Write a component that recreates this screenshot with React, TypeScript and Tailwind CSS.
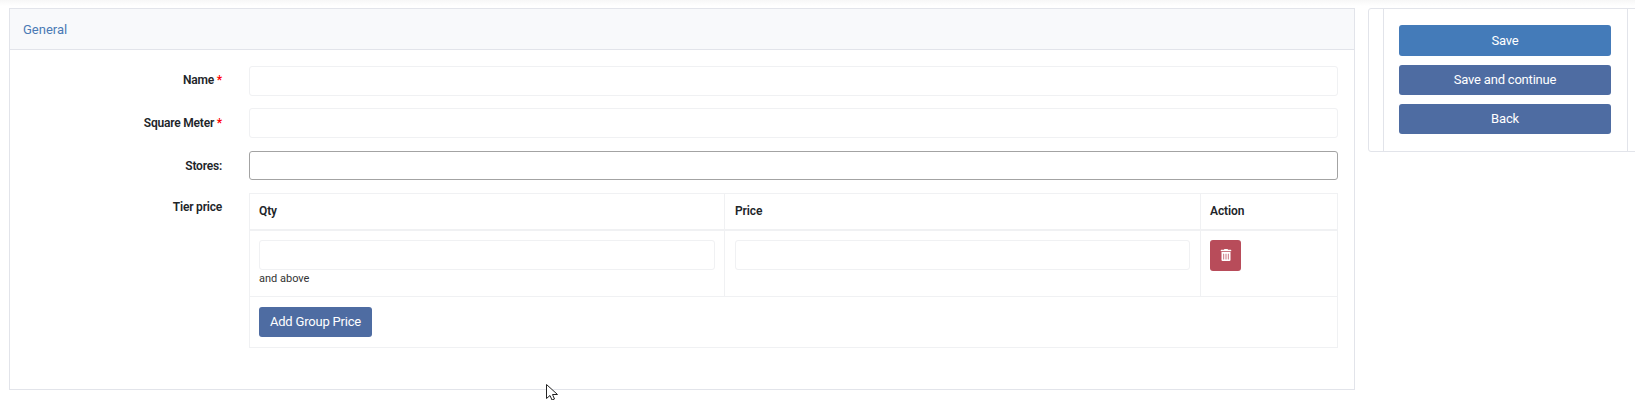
import React from "react";
import { FaTrashAlt } from "react-icons/fa";

const inputClass = "h-[30px] w-full rounded-[3px] border border-[#f0f1f3] bg-white";

const FormRow = ({ label, required, labelTop = "pt-[7px]", children }: { label: string; required?: boolean; labelTop?: string; children: React.ReactNode }) => (
    <div className="flex">
        <label className={`w-[212px] shrink-0 text-right text-[12px] font-semibold leading-[16px] tracking-[-0.2px] text-[#212529] ${labelTop}`}>
            {label}
            {required && <span className="text-[#ff0000]"> *</span>}
        </label>
        <div className="ml-[27px] flex-1">{children}</div>
    </div>
);

const SideButton = ({ label, color, height }: { label: string; color: string; height: string }) => (
    <button className={`w-full rounded-[3px] text-[13px] tracking-[-0.2px] text-white ${color} ${height}`}>{label}</button>
);

export default function App() {
    return (
        <div className="relative h-[400px] w-[1635px] overflow-hidden bg-white font-['Roboto',sans-serif]">
            <div className="absolute inset-x-0 top-0 h-[6px] bg-gradient-to-b from-[#f7f7f7] to-white" />
            <div className="relative flex items-start pl-[9px] pt-2">
                {/* General card */}
                <div className="h-[382px] w-[1346px] shrink-0 border border-[#e2e4ea] bg-white">
                    <div className="flex h-[41px] items-center border-b border-[#e2e4ea] bg-[#f8f9fb] pl-[13px] pt-[2px] text-[13px] text-[#4a7ab5]">
                        General
                    </div>
                    <div className="flex flex-col pr-[16px] pt-[16px]">
                        <FormRow label="Name" required labelTop="pt-[6px]">
                            <input className={inputClass} />
                        </FormRow>
                        <div className="mt-[12px]">
                            <FormRow label="Square Meter" required>
                                <input className={inputClass} />
                            </FormRow>
                        </div>
                        <div className="mt-[13px]">
                            <FormRow label="Stores:">
                                <input className="h-[29px] w-full rounded-[3px] border border-[#a3a3a3] bg-white" />
                            </FormRow>
                        </div>
                        <div className="mt-[13px]">
                            <FormRow label="Tier price" labelTop="pt-[6px]">
                                <table className="w-full table-fixed border-collapse text-[12px] text-[#212529]">
                                    <thead>
                                        <tr className="h-[36px] border-b-2 border-[#f0f1f3]">
                                            <th className="w-[475px] border border-b-2 border-[#f0f1f3] pl-[9px] text-left font-semibold tracking-[-0.1px]">Qty</th>
                                            <th className="w-[476px] border border-b-2 border-[#f0f1f3] pl-[10px] text-left font-semibold tracking-[-0.1px]">Price</th>
                                            <th className="border border-b-2 border-[#f0f1f3] pl-[9px] text-left font-semibold tracking-[-0.1px]">Action</th>
                                        </tr>
                                    </thead>
                                    <tbody>
                                        <tr className="h-[67px]">
                                            <td className="border border-[#f0f1f3] px-[9px] pt-[9px] align-top">
                                                <input className={inputClass} />
                                                <div className="mt-[1px] text-[11px] leading-[15px] text-[#333333]">and above</div>
                                            </td>
                                            <td className="border border-[#f0f1f3] px-[10px] pt-[9px] align-top">
                                                <input className={inputClass} />
                                            </td>
                                            <td className="border border-[#f0f1f3] pl-[9px] pt-[9px] align-top">
                                                <button className="flex h-[31px] w-[31px] items-center justify-center rounded-[3px] bg-[#b84c5a] text-white">
                                                    <FaTrashAlt size={12} />
                                                </button>
                                            </td>
                                        </tr>
                                        <tr className="h-[51px]">
                                            <td colSpan={3} className="border border-[#f0f1f3] px-[9px] align-middle">
                                                <button className="h-[30px] w-[113px] rounded-[3px] bg-[#4e6ca2] text-[13px] tracking-[-0.2px] text-white">
                                                    Add Group Price
                                                </button>
                                            </td>
                                        </tr>
                                    </tbody>
                                </table>
                            </FormRow>
                        </div>
                    </div>
                </div>

                {/* Actions card, runs off the window's right edge */}
                <div className="ml-[13px] h-[144px] w-[270px] shrink-0 rounded-[3px] border border-[#e2e4ea] pl-[14px]">
                    <div className="h-full w-[245px] border-x border-[#e2e4ea] pl-[15px] pr-[16px] pt-[16px]">
                        <div className="flex flex-col gap-[9px]">
                            <SideButton label="Save" color="bg-[#447bb9]" height="h-[31px]" />
                            <SideButton label="Save and continue" color="bg-[#4e6ca2]" height="h-[30px]" />
                            <SideButton label="Back" color="bg-[#4e6ca2]" height="h-[30px]" />
                        </div>
                    </div>
                </div>
            </div>

            {/* mouse pointer caught in the screenshot */}
            <svg className="absolute left-[546px] top-[384px]" width="14" height="17" viewBox="0 0 14 17">
                <path d="M0.5 0.5V14.5L4 11.5L6 16L8.5 15L6.5 10.5H11.5Z" fill="white" stroke="#222222" strokeWidth="1" />
            </svg>
        </div>
    );
}
